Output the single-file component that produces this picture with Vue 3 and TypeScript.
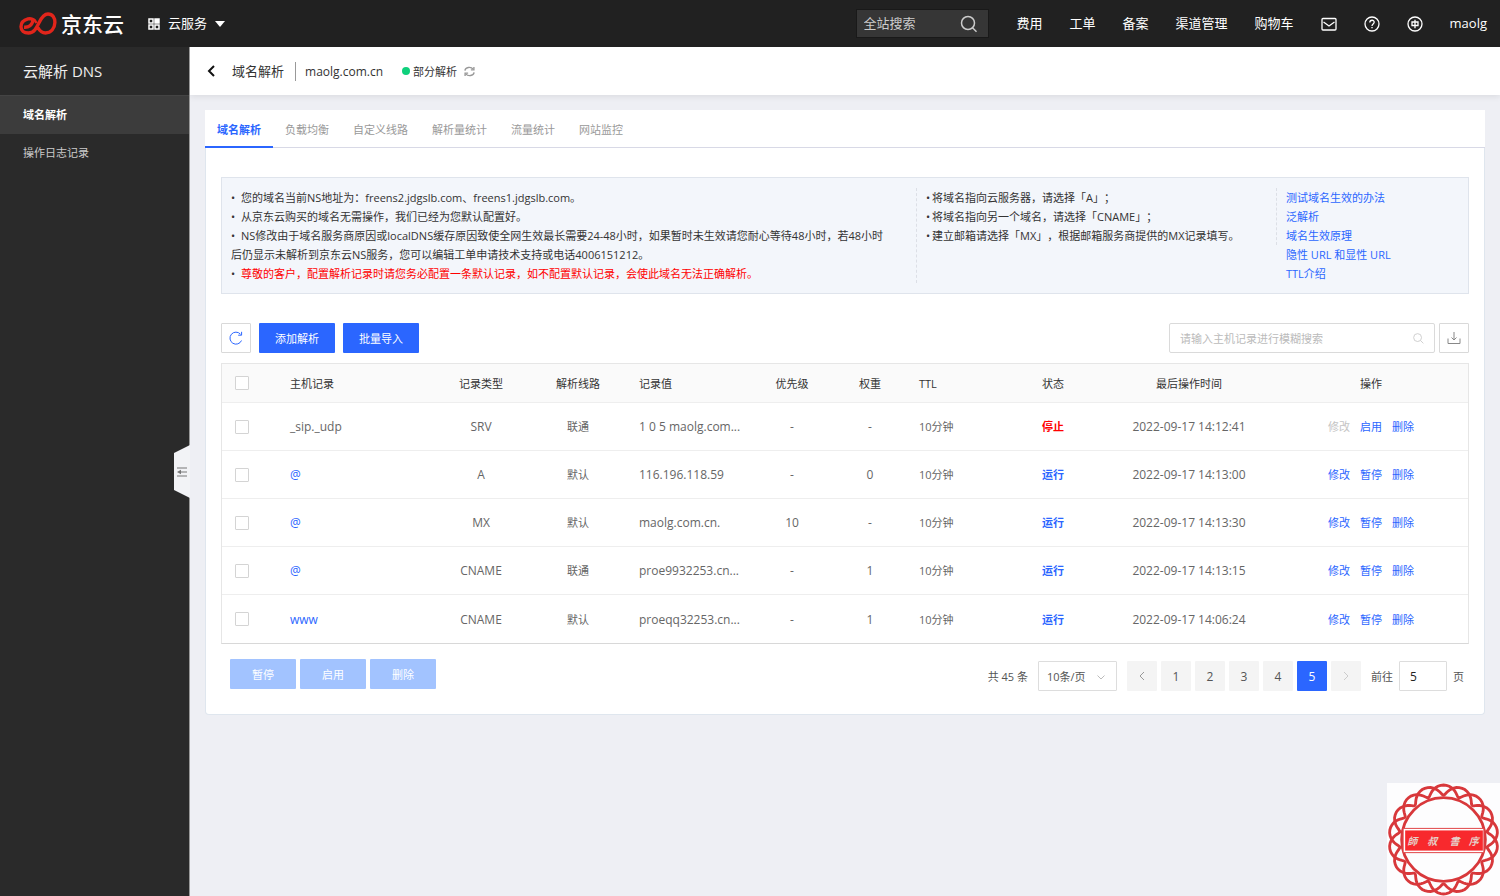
<script setup lang="ts">
import { ref } from 'vue'

interface DnsRecord {
  host: string
  plain?: boolean
  type: string
  line: string
  value: string
  priority: string
  weight: string
  ttl: string
  running: boolean
  time: string
}

const navLinks: string[] = ['费用', '工单', '备案', '渠道管理', '购物车']
const tabs: string[] = ['域名解析', '负载均衡', '自定义线路', '解析量统计', '流量统计', '网站监控']
const activeTab = ref<string>('域名解析')
const helpLinks: string[] = ['测试域名生效的办法', '泛解析', '域名生效原理', '隐性 URL 和显性 URL', 'TTL介绍']

const records: DnsRecord[] = [
  { host: '_sip._udp', plain: true, type: 'SRV', line: '联通', value: '1 0 5 maolg.com...', priority: '-', weight: '-', ttl: '10分钟', running: false, time: '2022-09-17 14:12:41' },
  { host: '@', type: 'A', line: '默认', value: '116.196.118.59', priority: '-', weight: '0', ttl: '10分钟', running: true, time: '2022-09-17 14:13:00' },
  { host: '@', type: 'MX', line: '默认', value: 'maolg.com.cn.', priority: '10', weight: '-', ttl: '10分钟', running: true, time: '2022-09-17 14:13:30' },
  { host: '@', type: 'CNAME', line: '联通', value: 'proe9932253.cn...', priority: '-', weight: '1', ttl: '10分钟', running: true, time: '2022-09-17 14:13:15' },
  { host: 'www', type: 'CNAME', line: '默认', value: 'proeqq32253.cn...', priority: '-', weight: '1', ttl: '10分钟', running: true, time: '2022-09-17 14:06:24' },
]

const pages: number[] = [1, 2, 3, 4, 5]
const currentPage = ref<number>(5)
const siteQuery = ref<string>('')
const hostQuery = ref<string>('')
const jumpPage = ref<string>('5')

// One strand of the woven rope round the seal.
function strand(phase: number): string {
  const points: string[] = []
  for (let i = 0; i <= 360; i += 2) {
    const t = (i * Math.PI) / 180
    const r = 49 + 5 * Math.cos(9 * t + phase)
    const a = t + 0.06 * Math.sin(9 * t + phase)
    points.push(`${(56 + r * Math.sin(a)).toFixed(1)} ${(56 - r * Math.cos(a)).toFixed(1)}`)
  }
  return `M${points.join('L')}Z`
}
const strands: string[] = [strand(0), strand(Math.PI)]
</script>

<template>
  <div class="app">
    <header class="topbar">
      <a class="brand" href="#">
        <svg class="brand-mark" viewBox="0 0 38 23" aria-hidden="true">
          <path d="M5 15.200C9.500 15.500 12.500 13.500 13.800 9.500C14.200 7.300 12 6.200 9 6.900C4.800 8 2 11 2 14.800C2 18.800 5 21 9.500 21C15 21 17.500 16 20 10.800C22.500 5.500 25 2 29 2C33.600 2 36 6 35.900 10.500C35.700 16.500 32 21 26.500 21C22.500 21 20.500 18.500 18.800 15.500" />
          <path class="thin" d="M14 7C15.500 7.500 16.500 9 17.500 11" />
        </svg>
        <span class="brand-name">京东云</span>
      </a>
      <button class="services" type="button">
        <svg class="grid-icon" viewBox="0 0 12 12" aria-hidden="true">
          <rect x="1" y="1" width="4" height="4" /><rect class="solid" x="7" y="1" width="4" height="4" />
          <rect x="1" y="7" width="4" height="4" /><rect x="7" y="7" width="4" height="4" />
        </svg>
        <span>云服务</span>
        <svg class="caret" viewBox="0 0 10 6" aria-hidden="true"><path d="M0 0H10L5 6Z" /></svg>
      </button>
      <div class="site-search">
        <input v-model="siteQuery" type="text" placeholder="全站搜索" aria-label="全站搜索" />
        <button type="button" aria-label="搜索">
          <svg viewBox="0 0 18 18"><circle cx="8" cy="8" r="6.500" /><path d="M12.500 12.800L16.500 16.800" /></svg>
        </button>
      </div>
      <nav class="topnav">
        <a v-for="link in navLinks" :key="link" href="#">{{ link }}</a>
        <a href="#" aria-label="消息">
          <svg viewBox="0 0 16 16"><rect x="1" y="2.500" width="14" height="11.500" rx="1" /><path d="M2.500 6L8 10L13.500 6" /></svg>
        </a>
        <a href="#" aria-label="帮助">
          <svg viewBox="0 0 16 16"><circle cx="8" cy="8" r="7" /><path d="M5.800 6.500C5.800 3.500 10.300 3.600 10.200 6.300C10.100 8 8 8 8 9.900M8 11V12.300" /></svg>
        </a>
        <a href="#" aria-label="语言">
          <svg viewBox="0 0 16 16"><circle cx="8" cy="8" r="7" /><path d="M5 6H11V9.500H5ZM8 3.800V12.300" /></svg>
        </a>
        <a href="#">maolg</a>
      </nav>
    </header>

    <div class="body">
      <aside class="sidebar">
        <h1>云解析 DNS</h1>
        <nav>
          <a class="current" href="#">域名解析</a>
          <a href="#">操作日志记录</a>
        </nav>
        <button class="collapse" type="button" aria-label="收起菜单">
          <svg viewBox="0 0 10 10"><path d="M0 1H10M4 5H10M0 9H10" /><path class="tip" d="M0 5L4 2.800V7.200Z" /></svg>
        </button>
      </aside>

      <main class="content">
        <div class="crumbs">
          <button class="back" type="button" aria-label="返回">
            <svg viewBox="0 0 8 12"><path d="M7 1L2 6L7 11" /></svg>
          </button>
          <span class="crumb-title">域名解析</span>
          <span class="domain">maolg.com.cn</span>
          <span class="dot"></span>
          <span class="state">部分解析</span>
          <button class="sync" type="button" aria-label="刷新状态">
            <svg viewBox="0 0 12 12"><path d="M1 5C1.500 1.200 7.500 .2 10 3.500M11 7C10.500 10.800 4.500 11.800 2 8.500" /><path d="M10.800 1V4.200H7.500M1.200 11V7.800H4.500" /></svg>
          </button>
        </div>

        <section class="panel">
          <div class="tabs" role="tablist">
            <button
              v-for="tab in tabs"
              :key="tab"
              type="button"
              role="tab"
              :aria-selected="tab === activeTab"
              :class="{ active: tab === activeTab }"
              @click="activeTab = tab"
            >{{ tab }}</button>
          </div>

          <div class="panel-body">
            <div class="notice">
              <ul class="notes">
                <li>您的域名当前NS地址为：freens2.jdgslb.com、freens1.jdgslb.com。</li>
                <li>从京东云购买的域名无需操作，我们已经为您默认配置好。</li>
                <li>NS修改由于域名服务商原因或localDNS缓存原因致使全网生效最长需要24-48小时，如果暂时未生效请您耐心等待48小时，若48小时<br />后仍显示未解析到京东云NS服务，您可以编辑工单申请技术支持或电话4006151212。</li>
                <li><span class="warn">尊敬的客户，配置解析记录时请您务必配置一条默认记录，如不配置默认记录，会使此域名无法正确解析。</span></li>
              </ul>
              <ul class="notes tight">
                <li>将域名指向云服务器，请选择「A」；</li>
                <li>将域名指向另一个域名，请选择「CNAME」；</li>
                <li>建立邮箱请选择「MX」，根据邮箱服务商提供的MX记录填写。</li>
              </ul>
              <div class="help">
                <a v-for="link in helpLinks" :key="link" href="#">{{ link }}</a>
              </div>
            </div>

            <div class="toolbar">
              <button class="square" type="button" aria-label="刷新">
                <svg class="reload" viewBox="0 0 14 14"><path d="M12.500 9.500A6 6 0 1 1 11.500 3.200" /><path d="M12.600 .8V4.200H9.200" /></svg>
              </button>
              <button class="primary" type="button">添加解析</button>
              <button class="primary" type="button">批量导入</button>
              <div class="host-search">
                <input v-model="hostQuery" type="text" placeholder="请输入主机记录进行模糊搜索" aria-label="主机记录" />
                <svg viewBox="0 0 12 12" aria-hidden="true"><circle cx="5" cy="5" r="4.300" /><path d="M8.200 8.200L11.300 11.300" /></svg>
              </div>
              <button class="square" type="button" aria-label="导出">
                <svg class="export" viewBox="0 0 14 14"><path d="M1 7.500V12.500H13V7.500M7 1V9M4.500 6.500L7 9L9.500 6.500" /></svg>
              </button>
            </div>

            <table class="records">
              <colgroup>
                <col class="c-check" /><col class="c-host" /><col class="c-type" /><col class="c-line" /><col class="c-value" />
                <col class="c-num" /><col class="c-num" /><col class="c-ttl" /><col class="c-status" /><col class="c-time" /><col class="c-ops" />
              </colgroup>
              <thead>
                <tr>
                  <th class="check"><input type="checkbox" aria-label="全选" /></th>
                  <th class="left">主机记录</th>
                  <th>记录类型</th>
                  <th>解析线路</th>
                  <th class="left">记录值</th>
                  <th>优先级</th>
                  <th>权重</th>
                  <th class="left">TTL</th>
                  <th>状态</th>
                  <th>最后操作时间</th>
                  <th>操作</th>
                </tr>
              </thead>
              <tbody>
                <tr v-for="(r, i) in records" :key="i">
                  <td class="check"><input type="checkbox" :aria-label="'选择 ' + r.host" /></td>
                  <td class="left latin"><span v-if="r.plain">{{ r.host }}</span><a v-else href="#">{{ r.host }}</a></td>
                  <td class="latin">{{ r.type }}</td>
                  <td>{{ r.line }}</td>
                  <td class="left latin">{{ r.value }}</td>
                  <td class="latin">{{ r.priority }}</td>
                  <td class="latin">{{ r.weight }}</td>
                  <td class="left">{{ r.ttl }}</td>
                  <td><b :class="r.running ? 'on' : 'off'">{{ r.running ? '运行' : '停止' }}</b></td>
                  <td class="latin">{{ r.time }}</td>
                  <td>
                    <div class="ops">
                      <button type="button" :disabled="!r.running">修改</button>
                      <button type="button">{{ r.running ? '暂停' : '启用' }}</button>
                      <button type="button">删除</button>
                    </div>
                  </td>
                </tr>
              </tbody>
            </table>

            <div class="footer">
              <div class="batch">
                <button type="button" disabled>暂停</button>
                <button type="button" disabled>启用</button>
                <button type="button" disabled>删除</button>
              </div>
              <div class="pager">
                <span>共 45 条</span>
                <div class="size">
                  <select aria-label="每页条数"><option>10条/页</option><option>20条/页</option><option>50条/页</option></select>
                  <svg viewBox="0 0 8 5" aria-hidden="true"><path d="M.5 .5L4 4L7.500 .5" /></svg>
                </div>
                <div class="pages">
                  <button class="prev" type="button" aria-label="上一页"><svg viewBox="0 0 6 10"><path d="M5 1L1 5L5 9" /></svg></button>
                  <button
                    v-for="p in pages"
                    :key="p"
                    type="button"
                    :class="{ active: p === currentPage }"
                    @click="currentPage = p"
                  >{{ p }}</button>
                  <button type="button" disabled aria-label="下一页"><svg viewBox="0 0 6 10"><path d="M1 1L5 5L1 9" /></svg></button>
                </div>
                <label class="jump">前往<input v-model="jumpPage" type="text" />页</label>
              </div>
            </div>
          </div>
        </section>
      </main>
    </div>

    <div class="seal">
      <svg viewBox="0 0 112 112" aria-hidden="true">
        <path v-for="(d, i) in strands" :key="i" class="rope" :d="d" />
        <circle class="ring" cx="56" cy="56" r="41.500" />
        <rect class="band-edge" x="16" y="45" width="80" height="24" />
        <rect class="band" x="18" y="47" width="77" height="20" />
        <text x="20" y="61">師</text>
        <text x="40" y="61">叔</text>
        <text x="62" y="61">書</text>
        <text x="81" y="61">序</text>
      </svg>
    </div>
  </div>
</template>

<style>
html,
body {
  background: #eeeff4;
}
</style>

<style scoped>
.app {
  display: flex;
  flex-direction: column;
  min-height: 100vh;
  font: 11px/19px "Open Sans", "Noto Sans CJK SC", sans-serif;
  text-spacing-trim: space-all;
  color: #333;
}
*,
*::before,
*::after {
  box-sizing: border-box;
}
button,
input,
select {
  font: inherit;
  color: inherit;
  border: 0;
  padding: 0;
  background: none;
}
button {
  cursor: pointer;
}
a {
  color: #2b66ff;
  text-decoration: none;
}
svg {
  display: block;
  fill: none;
  stroke: currentColor;
}
ul {
  list-style: none;
  margin: 0;
  padding: 0;
}

/* top bar */
.topbar {
  display: flex;
  align-items: center;
  height: 47px;
  padding: 0 13px 0 19px;
  background: #212121;
  color: #fff;
  font-size: 13px;
}
.brand {
  display: flex;
  align-items: center;
  gap: 4px;
  color: #fff;
}
.brand-mark {
  width: 38px;
  height: 23px;
  stroke: #e1251b;
  stroke-width: 3.400;
}
.thin {
  stroke-width: 2.600;
}
.brand-name {
  font-size: 21px;
  font-weight: 500;
  line-height: 28px;
}
.services {
  display: flex;
  align-items: center;
  gap: 8px;
  margin-left: 24px;
}
.grid-icon {
  width: 12px;
  height: 12px;
  stroke-width: 1.500;
}
.solid {
  fill: #fff;
}
.caret {
  width: 10px;
  height: 6px;
  fill: #fff;
  stroke: none;
}
.site-search {
  display: flex;
  align-items: center;
  width: 133px;
  height: 29px;
  margin-left: auto;
  padding: 0 10px 0 7px;
  background: #363636;
  border: 1px solid #191919;
}
.site-search input {
  flex: 1;
  min-width: 0;
  outline: 0;
}
.site-search input::placeholder {
  color: #ccc;
  opacity: 1;
}
.site-search svg {
  width: 18px;
  height: 18px;
  color: #ccc;
  stroke-width: 1.500;
}
.topnav {
  display: flex;
  align-items: center;
  gap: 27px;
  margin-left: 28px;
}
.topnav a {
  color: #fff;
}
.topnav svg {
  width: 16px;
  height: 16px;
  stroke-width: 1.300;
}

/* sidebar */
.body {
  display: flex;
  flex: 1;
}
.sidebar {
  position: relative;
  flex: none;
  width: 190px;
  border-right: 1px solid #999;
  background: #2a2a2a;
  color: #ccc;
}
.sidebar h1 {
  margin: 0;
  padding: 0 23px;
  color: #eee;
  font-size: 15px;
  font-weight: 400;
  line-height: 48px;
}
.sidebar nav a {
  display: block;
  padding: 0 23px;
  color: #ccc;
  line-height: 38px;
}
.sidebar nav .current {
  background: #3c3c3c;
  border-top: 1px solid #444;
  color: #fff;
  font-weight: 700;
}
.collapse {
  position: absolute;
  top: 398px;
  right: -1px;
  display: flex;
  align-items: center;
  width: 16px;
  height: 53px;
  padding-left: 3px;
  background: #f2f3f6;
  clip-path: polygon(0 8px, 100% 0, 100% 100%, 0 45px);
  color: #777;
}
.collapse svg {
  width: 10px;
  height: 10px;
}
.tip {
  fill: #777;
  stroke: none;
}

/* content */
.content {
  flex: 1;
  min-width: 0;
}
.crumbs {
  display: flex;
  align-items: center;
  height: 48px;
  padding: 0 16px;
  background: #fff;
  box-shadow: 0 2px 6px rgba(0, 0, 0, 0.08);
}
.back svg {
  width: 10px;
  height: 12px;
  color: #111;
  stroke-width: 2;
}
.crumb-title {
  margin-left: 16px;
  padding-right: 11px;
  border-right: 1px solid #999;
  font-size: 13px;
}
.domain {
  margin-left: 9px;
  font-size: 12px;
}
.dot {
  width: 8px;
  height: 8px;
  margin-left: 19px;
  border-radius: 50%;
  background: #0fd07c;
}
.state {
  margin: 0 7px 0 3px;
}
.sync svg {
  width: 11px;
  height: 11px;
  color: #999;
  stroke-width: 1.500;
}
.panel {
  margin: 15px 15px 0;
  border: 1px solid #dfe6ee;
  border-top: 0;
  border-radius: 0 0 4px 4px;
  background: #fff;
}
.tabs {
  display: flex;
  margin: 0 -1px;
  background: #fff;
  border-bottom: 1px solid #d8d9e6;
}
.tabs button {
  height: 38px;
  margin-bottom: -1px;
  padding: 2px 12px 0;
  border-bottom: 2px solid transparent;
  color: #999;
}
.tabs .active {
  border-color: #2b66ff;
  color: #2b66ff;
  font-weight: 700;
}
.panel-body {
  padding: 29px 15px 23px;
}
.notice {
  display: grid;
  grid-template-columns: 695fr 360fr 191fr;
  align-items: start;
  padding: 10px 0;
  border: 1px solid #dfe4ec;
  background: #f3f6fb;
}
.notes {
  padding-left: 9px;
  border-right: 1px dashed #dcdfe6;
}
.notes li::before {
  content: "•";
  display: inline-block;
  width: 10px;
}
.notes.tight li::before {
  width: 6px;
}
.warn {
  color: #f00;
}
.help {
  display: flex;
  flex-direction: column;
  align-items: start;
  padding-left: 9px;
}

.toolbar {
  display: flex;
  gap: 8px;
  margin: 29px 0 10px;
}
.square {
  display: flex;
  align-items: center;
  justify-content: center;
  width: 30px;
  height: 30px;
  border: 1px solid #d9d9d9;
  border-radius: 1px;
}
.square svg {
  width: 14px;
  height: 14px;
}
.reload {
  color: #2b66ff;
}
.export {
  color: #888;
}
.primary {
  width: 76px;
  height: 30px;
  border-radius: 1px;
  background: #2b66ff;
  color: #fff;
}
.host-search {
  display: flex;
  align-items: center;
  width: 266px;
  height: 30px;
  margin-left: auto;
  margin-right: -4px;
  padding: 0 10px;
  border: 1px solid #dadada;
  border-radius: 2px;
}
.host-search input {
  flex: 1;
  min-width: 0;
  outline: 0;
}
.host-search input::placeholder {
  color: #bbb;
  opacity: 1;
}
.host-search svg {
  width: 11px;
  height: 11px;
  color: #ccc;
}

.records {
  width: 100%;
  table-layout: fixed;
  border-collapse: separate;
  border-spacing: 0;
  border: 1px solid #e6e6e6;
  border-bottom-color: #d8d8d8;
  color: #666;
}
.c-check { width: 58px; }
.c-host { width: 155px; }
.c-type { width: 92px; }
.c-line { width: 102px; }
.c-value { width: 124px; }
.c-num { width: 78px; }
.c-ttl { width: 93px; }
.c-status { width: 102px; }
.c-time { width: 170px; }
.c-ops { width: 194px; }
.records th {
  height: 39px;
  padding: 0;
  border-bottom: 1px solid #eee;
  background: #fafafa;
  color: #333;
  font-weight: 400;
}
.records td {
  height: 48px;
  padding: 0;
  border-bottom: 1px solid #eee;
  text-align: center;
}
.records tr:last-child td {
  border-bottom: 0;
}
.records .left {
  padding-left: 10px;
  text-align: left;
}
.records .latin {
  font-size: 12px;
}
.records .check {
  padding-left: 13px;
  text-align: left;
}
.records input {
  appearance: none;
  display: block;
  width: 14px;
  height: 14px;
  margin: 0;
  border: 1px solid #d4d4d4;
  border-radius: 1px;
  background: #fff;
}
.on {
  color: #2b66ff;
}
.off {
  color: #f00;
}
.ops {
  display: flex;
  justify-content: center;
  gap: 10px;
}
.ops button {
  color: #2b66ff;
}
.ops button:disabled {
  color: #c4c4c4;
}

.footer {
  display: flex;
  align-items: start;
  justify-content: space-between;
  padding: 15px 5px 0 9px;
}
.batch {
  display: flex;
  gap: 4px;
}
.batch button {
  width: 66px;
  height: 30px;
  border-radius: 1px;
  background: #a2c3ff;
  color: #fff;
}
.pager {
  display: flex;
  align-items: center;
  gap: 10px;
  margin-top: 2px;
  color: #555;
}
.size {
  position: relative;
}
.size select {
  appearance: none;
  width: 79px;
  height: 30px;
  padding: 0 8px;
  border: 1px solid #ddd;
  border-radius: 1px;
  background: #fff;
}
.size svg {
  position: absolute;
  top: 14px;
  right: 12px;
  width: 8px;
  height: 5px;
  color: #bbb;
}
.pages {
  display: flex;
  gap: 4px;
  font-size: 12px;
}
.pages button {
  display: flex;
  align-items: center;
  justify-content: center;
  width: 30px;
  height: 30px;
  border-radius: 1px;
  background: #f4f4f4;
}
.pages .prev {
  color: #999;
}
.pages .active {
  background: #2b66ff;
  color: #fff;
}
.pages button:disabled {
  color: #ccc;
}
.pages svg {
  width: 6px;
  height: 10px;
}
.jump {
  display: flex;
  align-items: center;
  gap: 6px;
}
.jump input {
  width: 48px;
  height: 30px;
  padding: 0 10px;
  border: 1px solid #ddd;
  border-radius: 1px;
  color: #222;
  font-size: 12px;
}

/* floating seal */
.seal {
  position: fixed;
  right: 0;
  bottom: 0;
  width: 113px;
  height: 113px;
  background: #fdfdfe;
}
.rope,
.ring {
  stroke: #d8383b;
  stroke-width: 2.800;
}
.band-edge {
  fill: #fff;
  stroke: #e0484b;
}
.band {
  fill: #f8292d;
  stroke: none;
}
.seal text {
  fill: #e6cfc8;
  stroke: none;
  font: italic 700 10px "Noto Sans CJK TC", sans-serif;
}
</style>
